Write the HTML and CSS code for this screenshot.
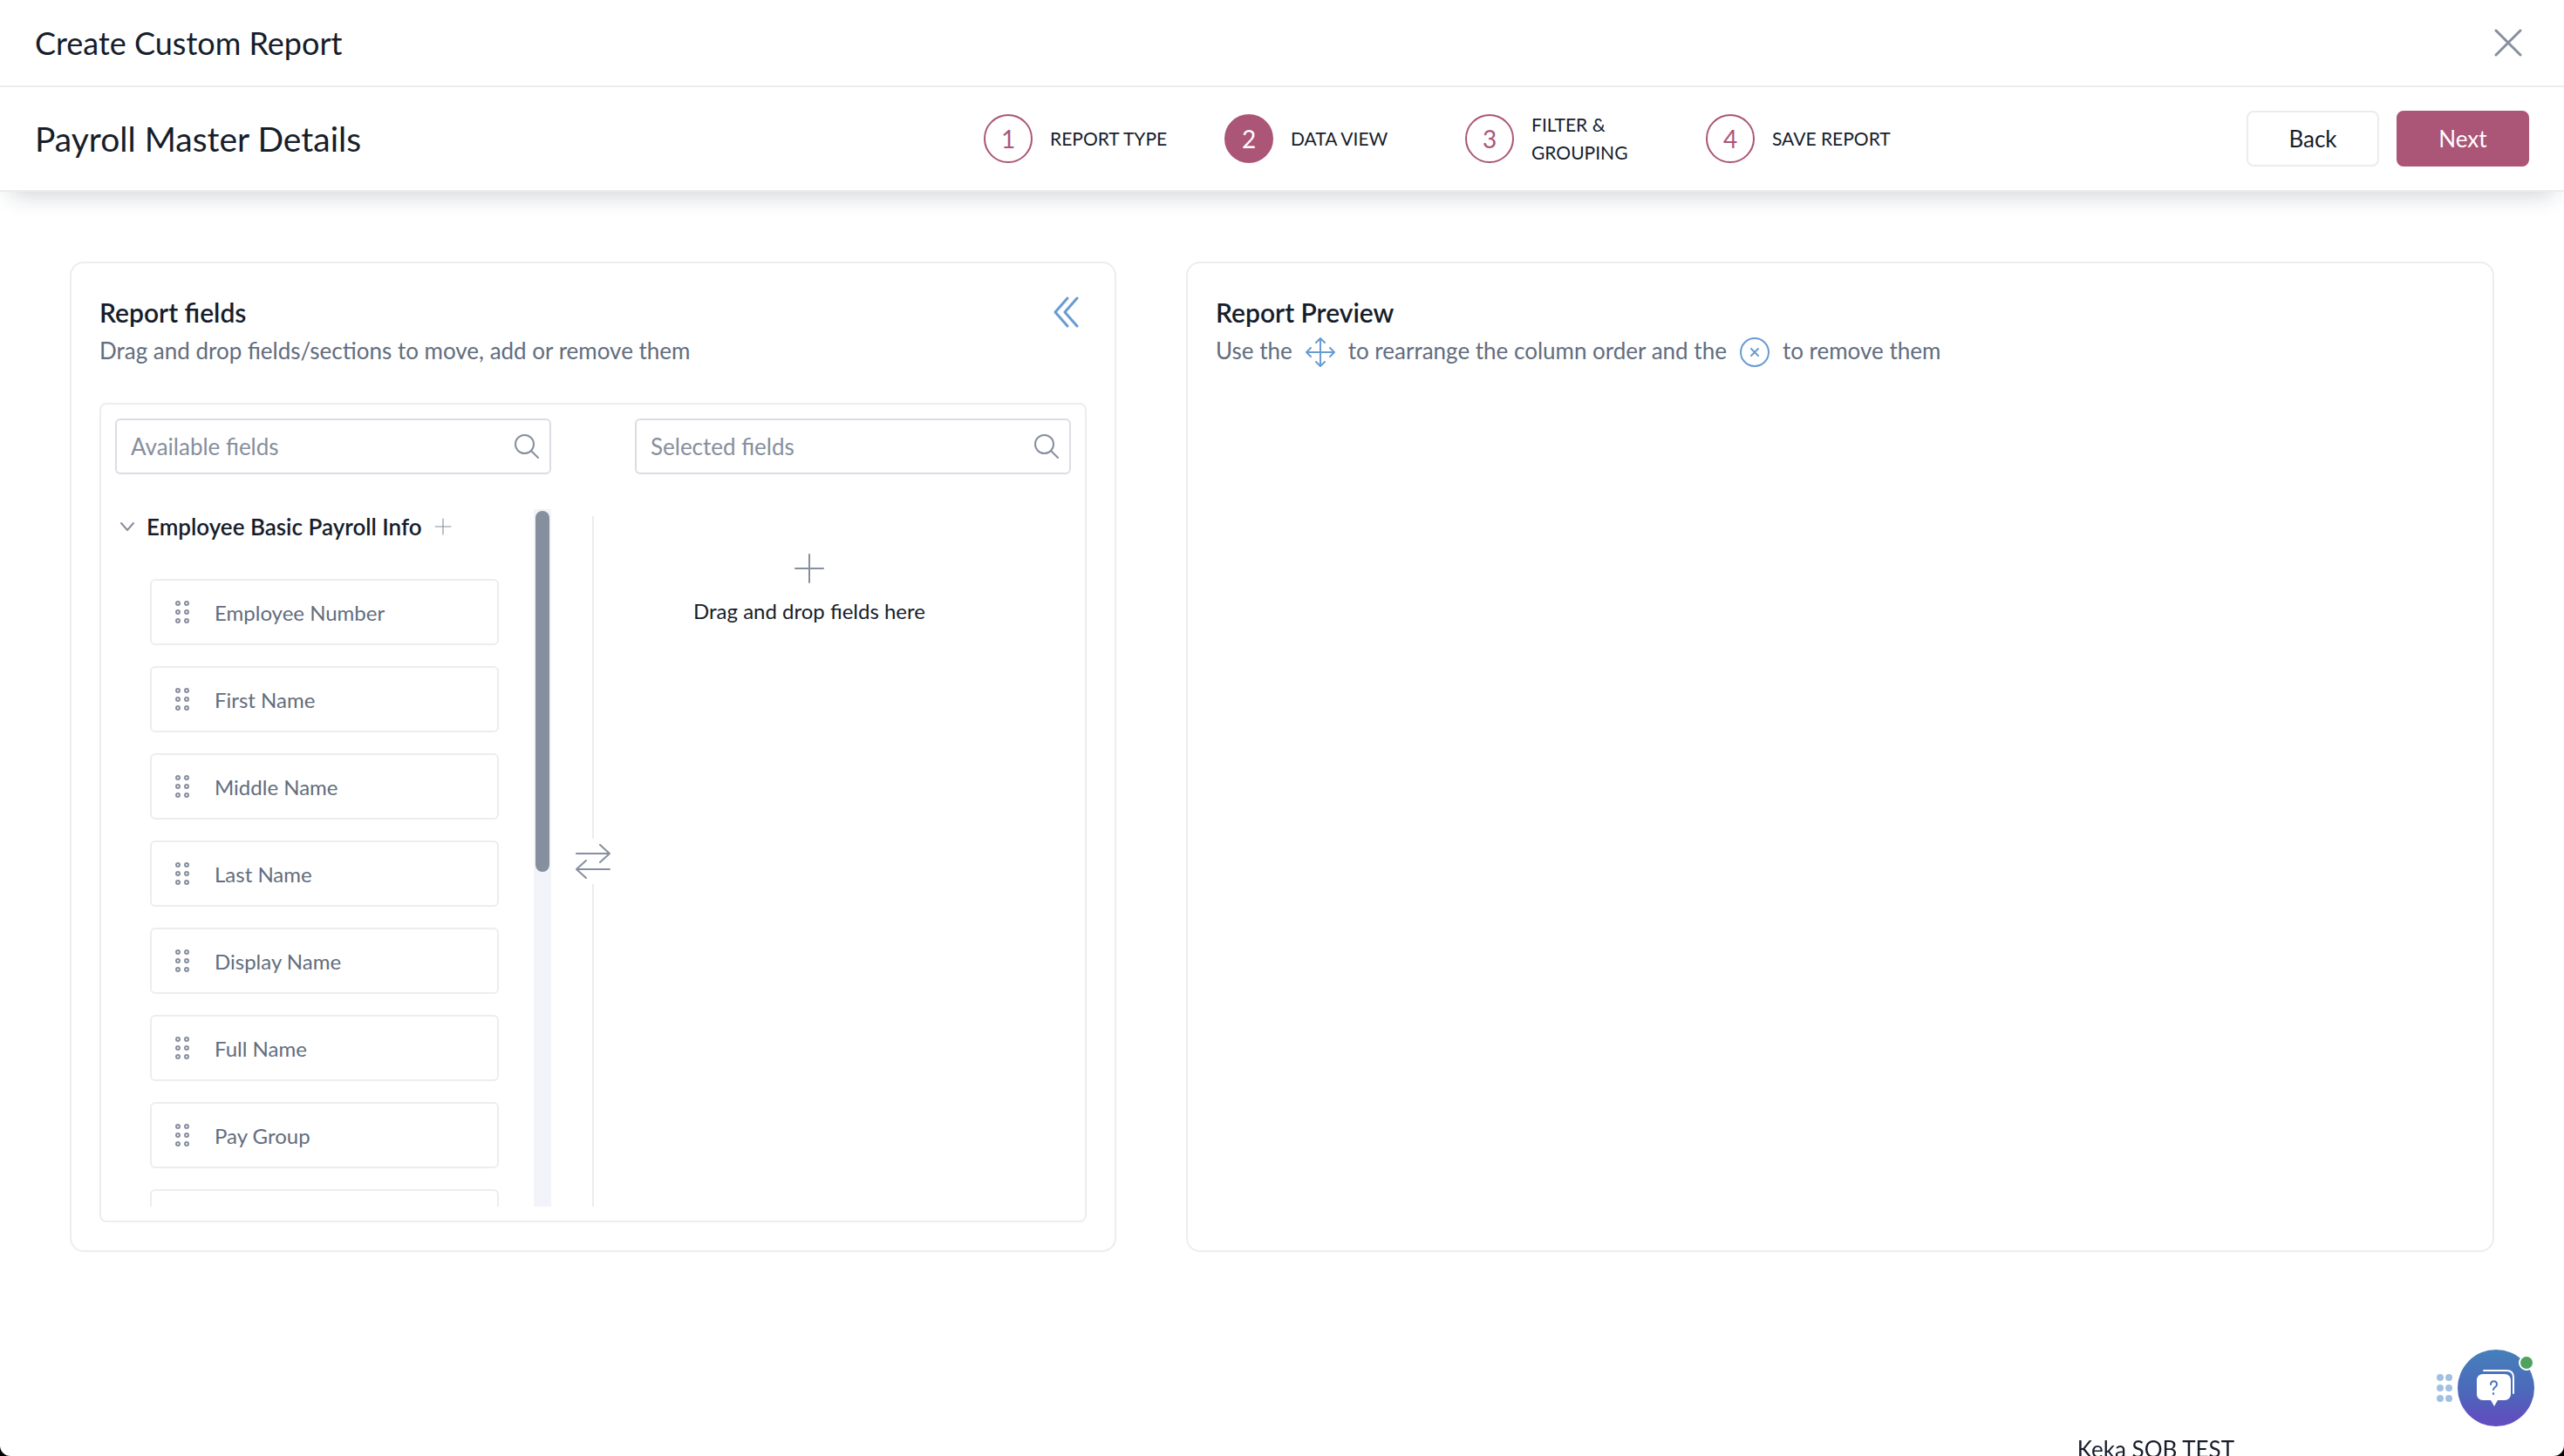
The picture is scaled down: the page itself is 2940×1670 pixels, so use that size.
FILE: index.html
```html
<!DOCTYPE html>
<html lang="en">
<head>
    <meta charset="UTF-8">
    <meta name="viewport" content="width=device-width, initial-scale=1.0">
    <title>Create Custom Report</title>
    <link rel="stylesheet" href="styles.css">
</head>
<body>
    <!-- Shared icons -->
    <svg class="sprite" aria-hidden="true">
        <symbol id="icon-search" viewBox="0 0 28 28">
            <circle cx="11.5" cy="11.5" r="10.5"/>
            <path d="M19 19l8 8"/>
        </symbol>
        <symbol id="icon-grip" viewBox="0 0 18 28">
            <circle cx="4" cy="4" r="2"/>
            <circle cx="14" cy="4" r="2"/>
            <circle cx="4" cy="14" r="2"/>
            <circle cx="14" cy="14" r="2"/>
            <circle cx="4" cy="24" r="2"/>
            <circle cx="14" cy="24" r="2"/>
        </symbol>
    </svg>

    <div class="page">
        <header class="title-bar">
            <h1>Create Custom Report</h1>
            <button type="button" class="icon-btn" aria-label="Close">
                <svg class="icon-close" viewBox="0 0 32 32"><path d="M2 2l28 28M30 2L2 30"/></svg>
            </button>
        </header>

        <section class="step-bar">
            <h2>Payroll Master Details</h2>
            <ol class="steps">
                <li class="step"><span class="step-number">1</span><span class="step-label">Report Type</span></li>
                <li class="step active"><span class="step-number">2</span><span class="step-label">Data View</span></li>
                <li class="step"><span class="step-number">3</span><span class="step-label">Filter &amp; Grouping</span></li>
                <li class="step"><span class="step-number">4</span><span class="step-label">Save Report</span></li>
            </ol>
            <div class="actions">
                <button type="button" class="btn">Back</button>
                <button type="button" class="btn btn-primary">Next</button>
            </div>
        </section>

        <main class="content">
            <section class="card">
                <div class="card-header">
                    <h3>Report fields</h3>
                    <button type="button" class="icon-btn" aria-label="Collapse">
                        <svg class="icon-collapse" viewBox="0 0 30 36"><path d="M16 2L2 18l14 16M27 2L13 18l14 16"/></svg>
                    </button>
                </div>
                <p class="hint">Drag and drop fields/sections to move, add or remove them</p>

                <div class="picker">
                    <div class="search">
                        <input type="text" placeholder="Available fields" aria-label="Available fields">
                        <svg class="icon-search"><use href="#icon-search"/></svg>
                    </div>
                    <div class="search search-selected">
                        <input type="text" placeholder="Selected fields" aria-label="Selected fields">
                        <svg class="icon-search"><use href="#icon-search"/></svg>
                    </div>

                    <div class="available">
                        <div class="field-group">
                            <div class="group-title">
                                <svg class="icon-chevron" viewBox="0 0 16 10"><path d="M1 1l7 8 7-8"/></svg>
                                <h4>Employee Basic Payroll Info</h4>
                                <button type="button" class="icon-btn" aria-label="Add all">
                                    <svg class="icon-plus" viewBox="0 0 18 18"><path d="M9 1v16M1 9h16"/></svg>
                                </button>
                            </div>
                            <ul class="fields">
                                <li class="field"><svg class="icon-grip"><use href="#icon-grip"/></svg>Employee Number</li>
                                <li class="field"><svg class="icon-grip"><use href="#icon-grip"/></svg>First Name</li>
                                <li class="field"><svg class="icon-grip"><use href="#icon-grip"/></svg>Middle Name</li>
                                <li class="field"><svg class="icon-grip"><use href="#icon-grip"/></svg>Last Name</li>
                                <li class="field"><svg class="icon-grip"><use href="#icon-grip"/></svg>Display Name</li>
                                <li class="field"><svg class="icon-grip"><use href="#icon-grip"/></svg>Full Name</li>
                                <li class="field"><svg class="icon-grip"><use href="#icon-grip"/></svg>Pay Group</li>
                                <li class="field"></li>
                            </ul>
                        </div>
                        <div class="scroll-track"><div class="scroll-thumb"></div></div>
                    </div>

                    <div class="divider">
                        <svg class="icon-swap" viewBox="0 0 40 40"><path d="M1 11h38M28 1l11 10-11 10M39 29H1M12 19L1 29l11 10"/></svg>
                    </div>

                    <div class="drop-zone">
                        <svg class="icon-plus-large" viewBox="0 0 34 34"><path d="M17 1v32M1 17h32"/></svg>
                        <p>Drag and drop fields here</p>
                    </div>
                </div>
            </section>

            <section class="card">
                <div class="card-header">
                    <h3>Report Preview</h3>
                </div>
                <p class="hint hint-icons">
                    <span>Use the</span>
                    <svg class="icon-hint" viewBox="0 0 34 34"><path d="M17 1v32M1 17h32M12 6l5-5 5 5M12 28l5 5 5-5M6 12l-5 5 5 5M28 12l5 5-5 5"/></svg>
                    <span>to rearrange the column order and the</span>
                    <svg class="icon-hint" viewBox="0 0 34 34"><circle cx="17" cy="17" r="16"/><path d="M13 13l8 8M21 13l-8 8"/></svg>
                    <span>to remove them</span>
                </p>
            </section>
        </main>

        <div class="chat">
            <svg class="chat-grip" viewBox="0 0 18 32">
                <circle cx="4" cy="4" r="4"/>
                <circle cx="14" cy="4" r="4"/>
                <circle cx="4" cy="16" r="4"/>
                <circle cx="14" cy="16" r="4"/>
                <circle cx="4" cy="28" r="4"/>
                <circle cx="14" cy="28" r="4"/>
            </svg>
            <button type="button" class="chat-btn" aria-label="Help">
                <svg class="icon-chat" viewBox="0 0 44 42">
                    <path class="bubble-back" d="M8 1h26c5 0 8 3 8 8v18"/>
                    <path class="bubble" d="M7 5h25c4 0 7 3 7 7v16c0 4-3 7-7 7h-8l-4 7-4-7H7c-4 0-7-3-7-7V12c0-4 3-7 7-7z"/>
                    <path class="question" d="M16 17c0-5 7-5 7 0 0 3-4 3-4 6M19 27v1"/>
                </svg>
                <span class="chat-status"></span>
            </button>
        </div>
        <span class="org-name">Keka SOB TEST</span>
    </div>
</body>
</html>
```
FILE: styles.css
```css
* {
    margin: 0;
    padding: 0;
    box-sizing: border-box;
}

html {
    background: #000;
}

body {
    font-family: Lato, "Open Sans", sans-serif;
    font-size: 26px;
    color: #161d2b;
    overflow: hidden;
}

h1, h2, h3, h4 {
    font-weight: 400;
}

ul, ol {
    list-style: none;
}

button, input {
    font: inherit;
    color: inherit;
}

svg {
    display: block;
    flex-shrink: 0;
    fill: none;
    stroke: #868f9e;
    stroke-width: 2;
    stroke-linecap: round;
    stroke-linejoin: round;
}

.sprite {
    display: none;
}

.page {
    min-height: 100vh;
    background: #fff;
    border-radius: 0 0 12px 12px;
    overflow: hidden;
}

.icon-btn {
    border: none;
    background: none;
    cursor: pointer;
}

/* Header */
.title-bar {
    display: flex;
    align-items: center;
    justify-content: space-between;
    height: 100px;
    padding: 0 48px 0 40px;
    border-bottom: 2px solid #ebecec;
}

.title-bar h1 {
    font-size: 36px;
}

.icon-close {
    width: 32px;
    height: 32px;
    stroke-width: 3;
}

.step-bar {
    display: grid;
    grid-template-columns: 1fr 1104px 668px;
    align-items: center;
    height: 120px;
    padding: 0 40px;
    border-bottom: 2px solid #ebecec;
    box-shadow: 0 16px 24px -12px rgba(22, 34, 60, 0.2);
}

.step-bar h2 {
    font-size: 39px;
}

/* Steps */
.steps {
    display: grid;
    grid-template-columns: repeat(4, 1fr);
}

.step {
    display: flex;
    align-items: center;
    gap: 20px;
    padding-right: 56px;
}

.step-number {
    display: flex;
    align-items: center;
    justify-content: center;
    flex-shrink: 0;
    width: 56px;
    height: 56px;
    border: 2px solid #ab5577;
    border-radius: 50%;
    color: #ab5577;
    font-size: 28px;
}

.step.active .step-number {
    background: #ab5577;
    color: #fff;
}

.step-label {
    font-size: 21px;
    line-height: 32px;
    text-transform: uppercase;
}

/* Buttons */
.actions {
    display: flex;
    justify-content: flex-end;
    gap: 20px;
}

.btn {
    width: 152px;
    height: 64px;
    border: 2px solid #ebecec;
    border-radius: 8px;
    background: #fff;
    cursor: pointer;
}

.btn-primary {
    border-color: #ab5577;
    background: #ab5577;
    color: #fff;
}

/* Cards */
.content {
    display: grid;
    grid-template-columns: 4fr 5fr;
    gap: 80px;
    padding: 80px;
}

.card {
    padding: 36px 32px 32px;
    border: 2px solid #ededed;
    border-radius: 16px;
}

.card-header {
    display: flex;
    align-items: center;
    justify-content: space-between;
    height: 40px;
    padding-right: 8px;
}

.card-header h3 {
    font-size: 30px;
    font-weight: 600;
}

.icon-collapse {
    width: 30px;
    height: 36px;
    stroke: #699cd1;
    stroke-width: 3;
}

.hint {
    margin-top: 2px;
    line-height: 44px;
    color: #626d7e;
}

.hint-icons {
    display: flex;
    align-items: center;
    gap: 15px;
}

.icon-hint {
    width: 34px;
    height: 34px;
    margin-top: 4px;
    stroke: #699cd1;
}

/* Field picker */
.picker {
    display: grid;
    grid-template-columns: 1fr 96px 1fr;
    row-gap: 40px;
    margin-top: 38px;
    padding: 16px;
    border: 2px solid #ededed;
    border-radius: 8px;
}

.search {
    display: flex;
    align-items: center;
    height: 64px;
    padding: 0 12px 0 16px;
    border: 2px solid #dcdde4;
    border-radius: 6px;
}

.search-selected {
    grid-column: 3;
}

.search input {
    flex: 1;
    min-width: 0;
    border: none;
    outline: none;
    background: none;
}

.search input::placeholder {
    color: #868f9e;
    opacity: 1;
}

.icon-search {
    width: 28px;
    height: 28px;
}

.available {
    display: grid;
    grid-template-columns: 1fr 20px;
    grid-template-rows: 100%;
    height: 800px;
    overflow: hidden;
}

.group-title {
    display: flex;
    align-items: center;
    gap: 14px;
    height: 40px;
    padding-left: 6px;
}

.group-title h4 {
    font-weight: 600;
}

.icon-chevron {
    width: 16px;
    height: 10px;
}

.icon-plus {
    width: 20px;
    height: 20px;
    stroke-width: 1;
}

.fields {
    display: flex;
    flex-direction: column;
    gap: 24px;
    padding: 40px 40px 0;
}

.field {
    display: flex;
    align-items: center;
    gap: 28px;
    flex-shrink: 0;
    height: 76px;
    padding-left: 26px;
    border: 2px solid #ededed;
    border-radius: 6px;
    color: #626d7e;
    font-size: 24px;
    cursor: grab;
}

.icon-grip {
    width: 18px;
    height: 28px;
}

.scroll-track {
    padding: 2px;
    background: #f3f4f9;
}

.scroll-thumb {
    height: 52%;
    border-radius: 8px;
    background: #868f9e;
}

.divider {
    display: flex;
    flex-direction: column;
    align-items: center;
    gap: 6px;
    padding-top: 8px;
}

.divider::before,
.divider::after {
    content: "";
    flex: 1;
    width: 2px;
    background: #ebecec;
}

.icon-swap {
    width: 40px;
    height: 40px;
}

.drop-zone {
    display: flex;
    flex-direction: column;
    align-items: center;
    gap: 12px;
    padding: 51px 100px 0 0;
    font-size: 24px;
    line-height: 40px;
}

.icon-plus-large {
    width: 34px;
    height: 34px;
}

/* Chat widget, floats over the page */
.chat {
    position: fixed;
    right: 34px;
    bottom: 34px;
    display: flex;
    align-items: center;
    gap: 6px;
}

.chat-grip {
    width: 18px;
    height: 32px;
    fill: #a2c0e2;
    stroke: none;
}

.chat-btn {
    position: relative;
    display: flex;
    align-items: center;
    justify-content: center;
    width: 88px;
    height: 88px;
    border: none;
    border-radius: 50%;
    background: linear-gradient(#4680bb, #4c68ba 55%, #5f4fbf 90%);
    cursor: pointer;
}

.icon-chat {
    width: 44px;
    height: 42px;
}

.bubble {
    fill: #fff;
    stroke: none;
}

.bubble-back {
    stroke: #fff;
}

.question {
    stroke: #4c74ba;
}

.chat-status {
    position: absolute;
    top: 6px;
    right: 0;
    width: 18px;
    height: 18px;
    border: 2px solid #fff;
    border-radius: 50%;
    background: #51a25f;
}

.org-name {
    position: fixed;
    right: 378px;
    bottom: -8px;
    line-height: 32px;
}
```
